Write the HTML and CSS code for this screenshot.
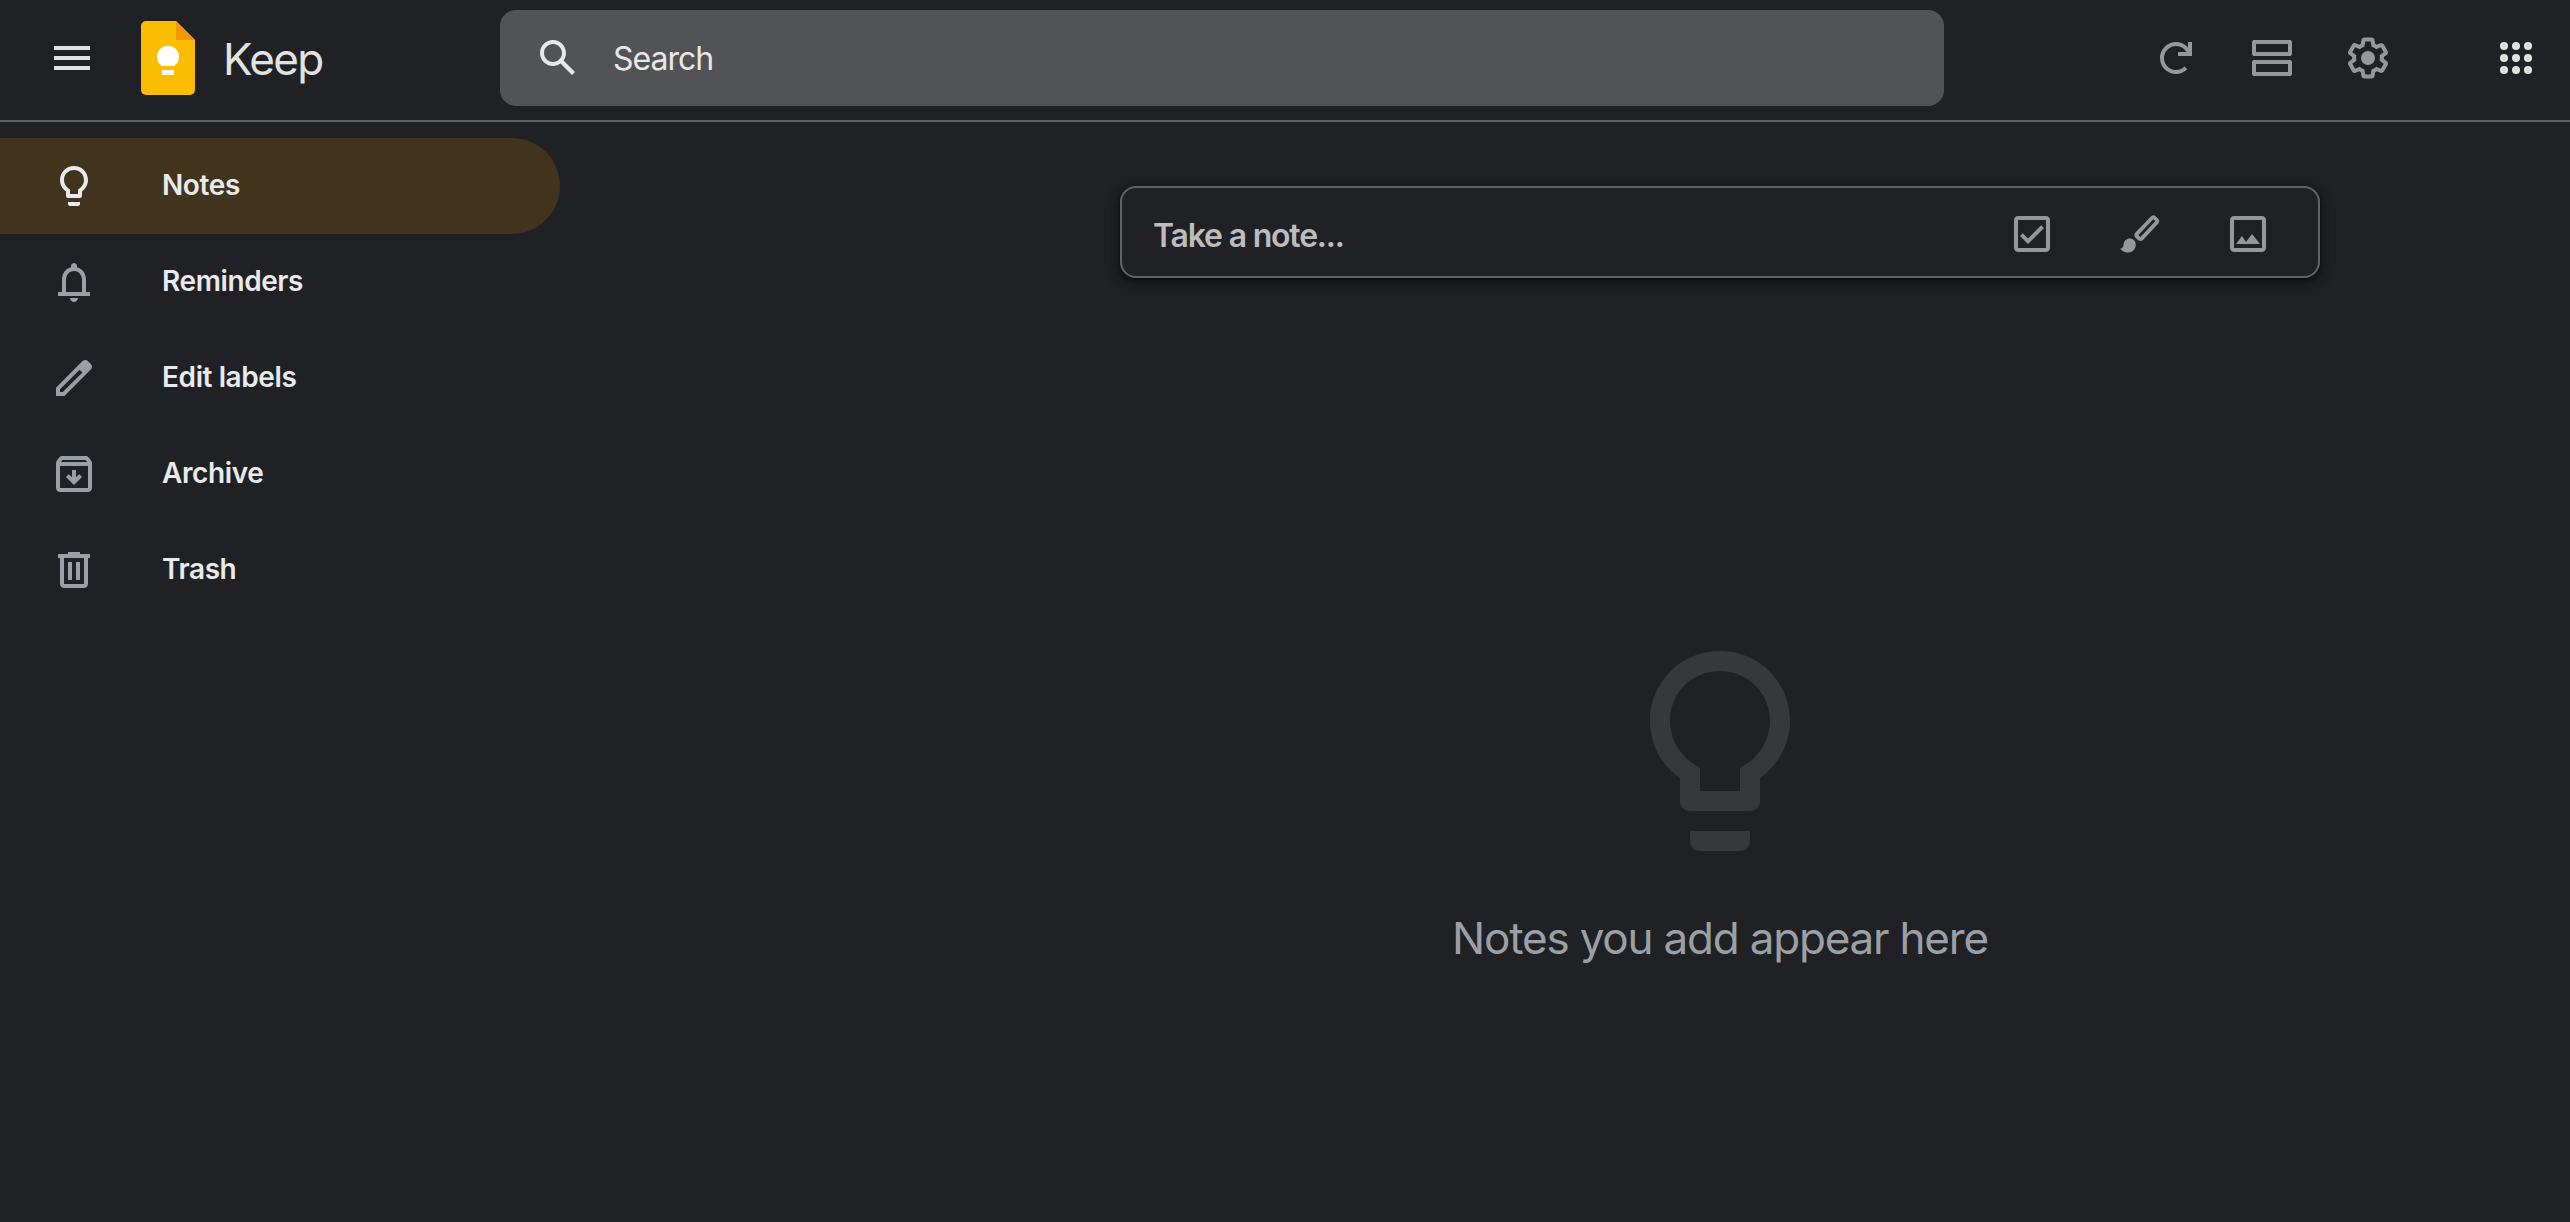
FILE: index.html
```
<!DOCTYPE html>
<html lang="en">
<head>
    <meta charset="UTF-8">
    <meta name="viewport" content="width=device-width, initial-scale=1.0">
    <title>Google Keep</title>
    <link rel="stylesheet" href="styles.css">
</head>
<body>
    <header class="header">
        <svg class="icon menu" viewBox="0 0 24 24"><path d="M3 18h18v-2H3v2zm0-5h18v-2H3v2zm0-7v2h18V6H3z"/></svg>
        <svg class="logo" viewBox="0 0 54 74">
            <path fill="#fbbc04" d="M5 0h30l19 19v50a5 5 0 0 1-5 5H5a5 5 0 0 1-5-5V5a5 5 0 0 1 5-5z"/>
            <path fill="#f29900" d="M35 0l19 19H35z"/>
            <path fill="#fff" d="M21 49h12v5H21zM33 45H21a11 11 0 1 1 12 0z"/>
        </svg>
        <span class="brand">Keep</span>

        <div class="search">
            <svg class="icon" viewBox="0 0 24 24"><path d="M20.49 19l-5.73-5.73C15.53 12.2 16 10.91 16 9.5 16 5.91 13.09 3 9.5 3S3 5.91 3 9.5 5.91 16 9.5 16c1.41 0 2.7-.47 3.77-1.24L19 20.49 20.49 19zM5 9.5C5 7.01 7.01 5 9.5 5S14 7.01 14 9.5 11.99 14 9.5 14 5 11.99 5 9.5z"/></svg>
            <span class="search-text">Search</span>
        </div>

        <div class="actions">
            <svg class="icon" viewBox="0 0 24 24"><path d="M17.65 6.35A8 8 0 1 0 17.65 17.65l-1.41-1.41a6 6 0 1 1 .96-7.24H13v2h7V4h-2v2.7z"/></svg>
            <svg class="icon" viewBox="0 0 24 24"><path fill-rule="evenodd" d="M3 3h18a1 1 0 0 1 1 1v6a1 1 0 0 1-1 1H3a1 1 0 0 1-1-1V4a1 1 0 0 1 1-1zm1 2v4h16V5zM3 13h18a1 1 0 0 1 1 1v6a1 1 0 0 1-1 1H3a1 1 0 0 1-1-1v-6a1 1 0 0 1 1-1zm1 2v4h16v-4z"/></svg>
            <svg class="icon" viewBox="0 0 24 24"><path d="M13.85 22.25h-3.7c-.74 0-1.36-.54-1.45-1.27l-.27-1.89c-.27-.14-.53-.29-.79-.46l-1.8.72c-.7.26-1.47-.03-1.81-.65L2.2 15.53c-.35-.66-.2-1.44.36-1.88l1.53-1.19c-.01-.15-.02-.3-.02-.46 0-.15.01-.31.02-.46l-1.52-1.19c-.59-.45-.74-1.26-.37-1.88l1.85-3.19c.34-.62 1.11-.9 1.79-.63l1.81.73c.26-.17.52-.32.78-.46l.27-1.91c.09-.7.71-1.25 1.44-1.25h3.7c.74 0 1.36.54 1.45 1.27l.27 1.89c.27.14.53.29.79.46l1.8-.72c.71-.26 1.48.03 1.82.65l1.84 3.18c.36.66.2 1.44-.36 1.88l-1.52 1.19c.01.15.02.3.02.46s-.01.31-.02.46l1.52 1.19c.56.45.72 1.23.37 1.86l-1.86 3.22c-.34.62-1.11.9-1.8.63l-1.8-.72c-.26.17-.52.32-.78.46l-.27 1.91c-.1.68-.72 1.22-1.46 1.22zm-3.23-2h2.76l.37-2.55.53-.22c.44-.18.88-.44 1.34-.78l.45-.34 2.38.96 1.38-2.4-2.03-1.58.07-.56c.03-.26.06-.51.06-.78s-.03-.53-.06-.78l-.07-.56 2.03-1.58-1.39-2.4-2.39.96-.45-.35c-.42-.32-.87-.58-1.33-.77l-.52-.22-.37-2.55h-2.76l-.37 2.55-.53.21c-.44.19-.88.44-1.34.79l-.45.33-2.38-.95-1.39 2.39 2.03 1.58-.07.56a7 7 0 0 0-.06.79c0 .26.02.53.06.78l.07.56-2.03 1.58 1.38 2.4 2.39-.96.45.35c.43.33.86.58 1.33.77l.53.22z"/><circle cx="12" cy="12" r="3.5"/></svg>
        </div>
        <svg class="icon apps" viewBox="0 0 24 24"><circle cx="6" cy="6" r="2"/><circle cx="12" cy="6" r="2"/><circle cx="18" cy="6" r="2"/><circle cx="6" cy="12" r="2"/><circle cx="12" cy="12" r="2"/><circle cx="18" cy="12" r="2"/><circle cx="6" cy="18" r="2"/><circle cx="12" cy="18" r="2"/><circle cx="18" cy="18" r="2"/></svg>
    </header>

    <div class="layout">
        <nav class="sidebar">
            <a class="item active">
                <svg class="icon" viewBox="0 0 24 24"><path d="M9 21c0 .5.4 1 1 1h4c.6 0 1-.5 1-1v-1H9v1zm3-19C8.1 2 5 5.1 5 9c0 2.4 1.2 4.5 3 5.7V17c0 .5.4 1 1 1h6c.6 0 1-.5 1-1v-2.3c1.8-1.3 3-3.4 3-5.7 0-3.9-3.1-7-7-7zm2.9 11.1l-.9.6V16h-4v-2.3l-.9-.6C7.8 12.2 7 10.6 7 9c0-2.8 2.2-5 5-5s5 2.2 5 5c0 1.6-.8 3.2-2.1 4.1z"/></svg>
                <span class="item-label">Notes</span>
            </a>
            <a class="item">
                <svg class="icon" viewBox="0 0 24 24"><path d="M18 17v-6c0-3.07-1.63-5.64-4.5-6.32V4c0-.83-.67-1.5-1.5-1.5s-1.5.67-1.5 1.5v.68C7.64 5.36 6 7.92 6 11v6H4v2h16v-2h-2zm-2 0H8v-6c0-2.48 1.51-4.5 4-4.5s4 2.02 4 4.5v6zm-4 5c1.1 0 2-.9 2-2h-4c0 1.1.9 2 2 2z"/></svg>
                <span class="item-label">Reminders</span>
            </a>
            <a class="item">
                <svg class="icon" viewBox="0 0 24 24"><path d="M20.41 4.94l-1.35-1.35c-.78-.78-2.05-.78-2.83 0L13.4 6.41 3 16.82V21h4.18l10.46-10.46 2.77-2.77c.79-.78.79-2.05 0-2.83zm-14 14.12L5 19v-1.36l9.82-9.82 1.41 1.41-9.82 9.83z"/></svg>
                <span class="item-label">Edit labels</span>
            </a>
            <a class="item">
                <svg class="icon" viewBox="0 0 24 24"><path d="M20.54 5.23l-1.39-1.68C18.88 3.21 18.47 3 18 3H6c-.47 0-.88.21-1.16.55L3.46 5.23C3.17 5.57 3 6.02 3 6.5V19c0 1.1.9 2 2 2h14c1.1 0 2-.9 2-2V6.5c0-.48-.17-.93-.46-1.27zM6.24 5h11.52l.83 1H5.42l.82-1zM5 19V8h14v11H5zm11-5.5l-4 4-4-4 1.41-1.41L11 13.67V10h2v3.67l1.59-1.58L16 13.5z"/></svg>
                <span class="item-label">Archive</span>
            </a>
            <a class="item">
                <svg class="icon" viewBox="0 0 24 24"><path d="M15 4V3H9v1H4v2h1v13c0 1.1.9 2 2 2h10c1.1 0 2-.9 2-2V6h1V4h-5zm2 15H7V6h10v13zM9 8h2v9H9zm4 0h2v9h-2z"/></svg>
                <span class="item-label">Trash</span>
            </a>
        </nav>

        <main class="content">
            <div class="note-box">
                <span class="note-text">Take a note...</span>
                <svg class="icon" viewBox="0 0 24 24"><path d="M19 3H5c-1.1 0-2 .9-2 2v14c0 1.1.9 2 2 2h14c1.1 0 2-.9 2-2V5c0-1.1-.9-2-2-2zm0 16H5V5h14v14zM18 9l-1.4-1.4-6.6 6.6-2.6-2.6L6 13l4 4z"/></svg>
                <svg class="icon" viewBox="0 0 24 24"><path d="M6.900 14.200c1.700 0 3 1.300 3 3.100 0 2.300-1.700 4-3.900 4-1.600 0-3.100-.7-3.900-1.900 1-.2 1.700-.9 1.700-2.100 0-1.800 1.400-3.100 3.100-3.100z"/><path fill="none" stroke="currentColor" stroke-width="1.900" stroke-linejoin="round" d="M18.100 3.900q.6-.6 1.200 0l1.100 1.100q.6.6 0 1.200l-7.600 8.100q-.6.600-1.200 0l-1.200-1.200q-.6-.6 0-1.200z"/></svg>
                <svg class="icon" viewBox="0 0 24 24"><path d="M19 3H5c-1.100 0-2 .9-2 2v14c0 1.100.9 2 2 2h14c1.100 0 2-.9 2-2V5c0-1.100-.9-2-2-2zm0 16H5V5h14v14zM14 12l-3 4-2-3-3 4h12z"/></svg>
            </div>

            <div class="empty">
                <svg class="empty-icon" viewBox="0 0 24 24"><path d="M9 21c0 .5.4 1 1 1h4c.6 0 1-.5 1-1v-1H9v1zm3-19C8.1 2 5 5.1 5 9c0 2.4 1.2 4.5 3 5.7V17c0 .5.4 1 1 1h6c.6 0 1-.5 1-1v-2.3c1.8-1.3 3-3.4 3-5.7 0-3.9-3.1-7-7-7zm2.9 11.1l-.9.6V16h-4v-2.3l-.9-.6C7.8 12.2 7 10.6 7 9c0-2.8 2.2-5 5-5s5 2.2 5 5c0 1.6-.8 3.2-2.1 4.1z"/></svg>
                <div class="empty-text">Notes you add appear here</div>
            </div>
        </main>
    </div>
</body>
</html>
```
FILE: styles.css
```
* {
    box-sizing: border-box;
}

body {
    margin: 0;
    height: 100vh;
    overflow: hidden;
    background: #202124;
    color: #e8eaed;
    font-family: Inter, "Liberation Sans", sans-serif;
}

.icon {
    display: block;
    width: 48px;
    height: 48px;
    flex: none;
    fill: currentColor;
}

/* top bar */
.header {
    display: flex;
    align-items: center;
    height: 122px;
    padding: 0 30px 4px 48px;
    border-bottom: 2px solid #5f6368;
    color: #e2e2e0;
}

.logo {
    width: 54px;
    height: 74px;
    margin-left: 45px;
}

.brand {
    width: 275px;
    margin-left: 28px;
    padding-top: 2px;
    font-size: 44px;
    letter-spacing: -1.6px;
}

.search {
    display: flex;
    align-items: center;
    gap: 31px;
    width: 1444px;
    height: 96px;
    margin-left: 2px;
    padding-left: 34px;
    border-radius: 16px;
    background: #525355;
    color: #e8e8e8;
}

.search-text {
    font-size: 32px;
    letter-spacing: -1px;
}

.actions {
    display: flex;
    gap: 48px;
    margin-left: auto;
    margin-right: 100px;
    color: #969799;
}

/* left menu */
.layout {
    display: flex;
}

.sidebar {
    width: 560px;
    padding-top: 16px;
}

.item {
    display: flex;
    align-items: center;
    gap: 64px;
    height: 96px;
    padding-left: 50px;
    font-size: 28px;
    font-weight: 600;
    letter-spacing: -0.4px;
}

.item-label {
    padding-bottom: 2px;
}

.item .icon {
    color: #9aa0a6;
}

.item.active {
    background: #41331c;
    border-radius: 0 48px 48px 0;
}

.item.active .icon {
    color: #e8eaed;
}

/* notes area */
.content {
    display: flex;
    flex-direction: column;
    align-items: center;
    width: 1700px;
    margin-left: 310px;
    padding-top: 64px;
}

.note-box {
    display: flex;
    align-items: center;
    gap: 60px;
    width: 1200px;
    height: 92px;
    padding: 4px 46px 0 31px;
    border: 2px solid #5f6368;
    border-radius: 16px;
    box-shadow: 0 2px 4px rgba(0, 0, 0, 0.6), 0 4px 12px 4px rgba(0, 0, 0, 0.3);
    color: #969799;
}

.note-text {
    flex: 1;
    padding-top: 3px;
    color: #bcbcbd;
    font-size: 32px;
    font-weight: 600;
    letter-spacing: -1.2px;
}

.empty {
    display: flex;
    flex-direction: column;
    align-items: center;
    margin-top: 353px;
}

.empty-icon {
    width: 240px;
    height: 240px;
    fill: #37383a;
}

.empty-text {
    margin-top: 39px;
    color: #9aa0a6;
    font-size: 44px;
    line-height: 56px;
    letter-spacing: -1.2px;
    white-space: nowrap;
}
```
